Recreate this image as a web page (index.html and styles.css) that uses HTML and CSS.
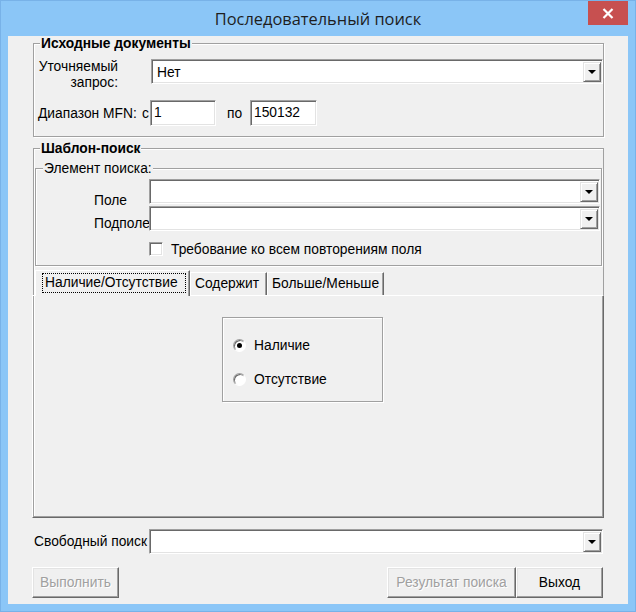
FILE: index.html
```html
<!DOCTYPE html>
<html lang="ru">
<head>
<meta charset="utf-8">
<title>Последовательный поиск</title>
<link rel="stylesheet" href="styles.css">
</head>
<body>
<div class="window">
  <div class="titlebar">
    <span></span>
    <div class="title">Последовательный поиск</div>
    <div class="tb-right">
      <div class="close"><svg width="12" height="11" viewBox="0 0 12 11"><path d="M1.5 1 L10.5 10 M10.5 1 L1.5 10" stroke="#fff" stroke-width="2.2" fill="none"/></svg></div>
    </div>
  </div>
  <div class="client">
    <div class="group g1">
      <div class="legend bold">Исходные документы</div>
      <div class="row r-query">
        <div class="lbl-query">Уточняемый<br>запрос:</div>
        <div class="combo"><span class="val">Нет</span><span class="drop"><i class="tri"></i></span></div>
      </div>
      <div class="row r-range">
        <span class="lbl-range">Диапазон MFN:</span>
        <span class="lbl-c">с</span>
        <div class="edit e1">1</div>
        <span class="lbl-po">по</span>
        <div class="edit e2">150132</div>
      </div>
    </div>

    <div class="group g2">
      <div class="legend bold">Шаблон-поиск</div>
      <div class="group g3">
        <div class="legend g3-legend">Элемент поиска:</div>
        <div class="row r-field">
          <span class="lbl-field">Поле</span>
          <div class="combo"><span class="val"></span><span class="drop"><i class="tri"></i></span></div>
        </div>
        <div class="row r-sub">
          <span class="lbl-sub">Подполе</span>
          <div class="combo"><span class="val"></span><span class="drop"><i class="tri"></i></span></div>
        </div>
        <div class="row r-check">
          <span class="checkbox"></span>
          <span class="check-lbl">Требование ко всем повторениям поля</span>
        </div>
      </div>
      <div class="tabs">
        <div class="tab active"><span class="focus">Наличие/Отсутствие</span></div>
        <div class="tab t2">Содержит</div>
        <div class="tab t3">Больше/Меньше</div>
      </div>
      <div class="panel">
        <div class="radio-group">
          <div class="radio-row rr1"><span class="radio checked"></span><span>Наличие</span></div>
          <div class="radio-row rr2"><span class="radio"></span><span>Отсутствие</span></div>
        </div>
      </div>
    </div>

    <div class="row r-free">
      <span class="lbl-free">Свободный поиск</span>
      <div class="combo"><span class="val"></span><span class="drop"><i class="tri"></i></span></div>
    </div>

    <div class="buttons">
      <div class="btn disabled b-run">Выполнить</div>
      <div class="btn disabled b-res">Результат поиска</div>
      <div class="btn b-exit">Выход</div>
    </div>
  </div>
</div>
</body>
</html>
```

FILE: styles.css
```css
* { box-sizing: border-box; }
html, body { margin: 0; padding: 0; }
body {
  width: 636px;
  height: 612px;
  overflow: hidden;
  font-family: "Liberation Sans", Arial, sans-serif;
  font-size: 13.8px;
  color: #000;
}
.window {
  width: 636px;
  height: 612px;
  background: #8bc6f7;
  box-shadow: inset 0 0 0 1px #78b2e8;
}
.titlebar {
  height: 36px;
  display: grid;
  grid-template-columns: 1fr auto 1fr;
}
.title {
  font-family: "Open Sans", "Noto Sans", sans-serif;
  font-size: 16.4px;
  color: #1e1e1e;
  line-height: 20px;
  padding-top: 9px;
}
.tb-right { display: flex; justify-content: flex-end; padding-right: 8px; }
.close {
  margin-top: 1px;
  width: 40px;
  height: 24px;
  background: #c75050;
  display: flex;
  align-items: center;
  justify-content: center;
}
.client {
  margin: 0 8px;
  height: 568px;
  background: #f0f0f0;
  padding: 7px 24px 0 25px;
}
.bold { font-weight: bold; }

/* group boxes */
.group {
  border: 1px solid #a0a0a0;
  box-shadow: 1px 1px 0 #fff, inset 1px 1px 0 #fff;
}
.legend {
  display: block;
  width: max-content;
  margin-top: -8px;
  margin-left: 6px;
  height: 15px;
  line-height: 15px;
  padding: 0 1px;
  background: #f0f0f0;
}
.g3-legend { margin-left: 7px; }
.row { display: flex; }

.g1 { padding-bottom: 10px; }
.r-query { margin-top: 8px; align-items: flex-start; }
.lbl-query {
  width: 84px;
  padding-left: 3px;
  text-align: right;
  line-height: 16px;
  white-space: nowrap;
}
.r-query .combo { margin-left: 33px; }
.r-range { margin-top: 9px; align-items: center; height: 26px; }
.lbl-range { width: 108px; padding-left: 4px; white-space: nowrap; }
.lbl-c { width: 8px; }
.lbl-po { margin-left: 11px; width: 23px; }
.edit {
  height: 26px;
  background: #fff;
  border: 1px solid;
  border-color: #a0a0a0 #fff #fff #a0a0a0;
  box-shadow: inset 1px 1px 0 #696969, inset -1px -1px 0 #e3e3e3;
  padding: 0 3px;
  line-height: 24px;
}
.e1 { width: 66px; }
.e2 { width: 67px; }

/* combos */
.combo {
  flex: 1;
  height: 25px;
  background: #fff;
  border: 1px solid;
  border-color: #a0a0a0 #fff #fff #a0a0a0;
  box-shadow: inset 1px 1px 0 #696969, inset -1px -1px 0 #e3e3e3;
  display: flex;
  align-items: stretch;
  padding: 2px 1px 1px 2px;
}
.combo .val { flex: 1; padding-left: 3px; line-height: 21px; }
.drop {
  width: 18px;
  background: #f0f0f0;
  border: 1px solid;
  border-color: #e3e3e3 #696969 #696969 #e3e3e3;
  box-shadow: inset 1px 1px 0 #fff, inset -1px -1px 0 #a0a0a0;
  display: flex;
  align-items: center;
  justify-content: center;
}
.tri {
  width: 0; height: 0;
  border-left: 4px solid transparent;
  border-right: 4px solid transparent;
  border-top: 4px solid #000;
}

/* template group */
.g2 { margin-top: 11px; border-bottom: none; box-shadow: inset 1px 1px 0 #fff; }
.g3 { margin: 12px 1px 0 1px; padding-bottom: 8px; }
.r-field { margin-top: 3px; height: 25px; align-items: flex-start; }
.r-sub { margin-top: 2px; height: 25px; align-items: flex-start; }
.lbl-field { width: 113px; padding-left: 58px; padding-top: 14px; line-height: 16px; }
.lbl-sub { width: 113px; padding-left: 58px; padding-top: 10px; line-height: 16px; }
.r-field .combo, .r-sub .combo { margin-right: 1px; }
.r-check { margin-top: 10px; height: 16px; align-items: center; padding-left: 113px; }
.checkbox {
  width: 14px; height: 14px;
  background: #fff;
  border: 1px solid;
  border-color: #a0a0a0 #fff #fff #a0a0a0;
  box-shadow: inset 1px 1px 0 #696969, inset -1px -1px 0 #e3e3e3;
}
.check-lbl { margin-left: 8px; }

/* tabs */
.tabs { margin-top: 4px; height: 25px; display: flex; align-items: flex-end; padding-left: 1px; position: relative; z-index: 1; }
.tab {
  height: 23px;
  border: 1px solid;
  border-bottom: none;
  border-color: #fff #696969 transparent #fff;
  box-shadow: inset -1px 0 0 #a0a0a0;
  padding: 0 4px;
  line-height: 21px;
  background: #f0f0f0;
  white-space: nowrap;
}
.tab.active {
  height: 26px;
  width: 155px;
  margin-bottom: -1px;
  padding: 2px 3px 0 6px;
}
.focus { display: block; border: 1px dotted #000; padding: 0 2px; line-height: 18px; }
.t2 { width: 77px; }
.t3 { width: 117px; }

.panel {
  margin: 0 -1px 0 -2px;
  height: 223px;
  border: 1px solid;
  border-color: #fff #696969 #696969 #fff;
  box-shadow: inset -1px -1px 0 #a0a0a0;
  padding-top: 21px;
  padding-left: 189px;
}
.radio-group {
  width: 161px;
  height: 85px;
  border: 1px solid #a0a0a0;
  box-shadow: 1px 1px 0 #fff, inset 1px 1px 0 #fff;
  padding-left: 10px;
}
.radio-row { display: flex; align-items: center; height: 16px; }
.rr1 { margin-top: 19px; }
.rr2 { margin-top: 18px; }
.radio {
  width: 13px; height: 13px;
  border-radius: 50%;
  background: #fff;
  border: 1px solid;
  border-color: #a0a0a0 #fff #fff #a0a0a0;
  box-shadow: inset 1px 1px 0 #696969;
  margin-right: 8px;
  display: flex; align-items: center; justify-content: center;
}
.radio.checked::after {
  content: "";
  width: 5px; height: 5px;
  border-radius: 50%;
  background: #000;
}

/* free search */
.r-free { margin-top: 11px; align-items: center; padding-left: 1px; margin-right: 1px; }
.lbl-free { width: 115px; white-space: nowrap; }

/* buttons */
.buttons { margin: 13px 1px 0 -1px; display: flex; height: 31px; }
.btn {
  height: 31px;
  background: #f0f0f0;
  border: 1px solid;
  border-color: #fff #696969 #696969 #fff;
  box-shadow: inset -1px -1px 0 #a0a0a0, inset 1px 1px 0 #e3e3e3;
  display: flex; align-items: center; justify-content: center;
  white-space: nowrap;
}
.btn.disabled { color: #a0a0a0; text-shadow: 1px 1px 0 #fff; }
.b-run { width: 87px; }
.b-res { width: 129px; margin-left: auto; }
.b-exit { width: 87px; }
```
